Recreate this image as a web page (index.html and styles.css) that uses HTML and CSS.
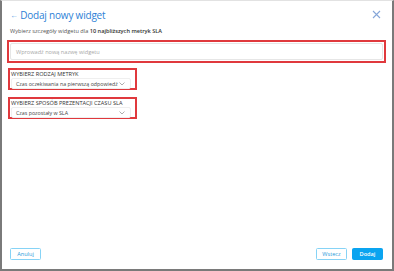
FILE: index.html
```html
<!DOCTYPE html>
<html lang="pl">
<head>
    <meta charset="UTF-8">
    <title>Dodaj nowy widget</title>
    <link rel="stylesheet" href="styles.css">
</head>
<body>
    <div class="dialog">
        <div class="dialog-head">
            <h1 class="title"><span class="back">&larr;</span> Dodaj nowy widget</h1>
            <svg class="close" width="9" height="9" viewBox="0 0 9 9"><path d="M1 1L8 8M8 1L1 8" stroke="#86a6d8" stroke-width="1.1" fill="none"/></svg>
        </div>
        <p class="subtitle">Wybierz szczegóły widgetu dla <b>10 najbliższych metryk SLA</b></p>

        <div class="mark mark-wide">
            <div class="field">Wprowadź nową nazwę widgetu</div>
        </div>

        <div class="mark mark-narrow">
            <div class="label">Wybierz rodzaj metryk</div>
            <div class="select">
                <span>Czas oczekiwania na pierwszą odpowiedź</span>
                <svg width="6" height="4" viewBox="0 0 6 4"><path d="M0.5 0.5L3 3L5.5 0.5" stroke="#999" stroke-width="0.8" fill="none"/></svg>
            </div>
        </div>

        <div class="mark mark-narrow">
            <div class="label">Wybierz sposób prezentacji czasu SLA</div>
            <div class="select">
                <span>Czas pozostały w SLA</span>
                <svg width="6" height="4" viewBox="0 0 6 4"><path d="M0.5 0.5L3 3L5.5 0.5" stroke="#999" stroke-width="0.8" fill="none"/></svg>
            </div>
        </div>

        <div class="spacer"></div>

        <div class="footer">
            <button class="btn btn-outline">Anuluj</button>
            <div class="footer-right">
                <button class="btn btn-outline">Wstecz</button>
                <button class="btn btn-primary">Dodaj</button>
            </div>
        </div>
    </div>
</body>
</html>
```

FILE: styles.css
```css
* {
    margin: 0;
    padding: 0;
    box-sizing: border-box;
    font-family: 'Open Sans', 'Noto Sans', sans-serif;
}

body {
    background: #fff;
}

.dialog {
    width: 394px;
    height: 271px;
    border-left: 2px solid #7a7a7a;
    border-right: 2px solid #7a7a7a;
    border-bottom: 2px solid #7a7a7a;
    border-top: 1px solid #e2e2e2;
    display: flex;
    flex-direction: column;
    padding: 0 6px 9px 5px;
}

.dialog-head {
    display: flex;
    justify-content: space-between;
    align-items: center;
    padding: 5px 5px 0 3px;
    height: 23px;
}

.title {
    font-size: 10px;
    font-weight: 400;
    color: #2d7fd6;
    letter-spacing: -0.2px;
    white-space: nowrap;
}

.back {
    font-size: 8px;
    color: #62a0e4;
    position: relative;
    top: -1px;
}

.close {
    margin-top: -2px;
}

.subtitle {
    font-size: 5.6px;
    color: #555;
    padding: 3px 0 0 3px;
    height: 16px;
}

.subtitle b {
    font-weight: 600;
    color: #333;
}

.mark {
    border: 2px solid #e0393d;
}

.mark-wide {
    padding: 1px 1px;
    height: 23px;
}

.field {
    height: 17px;
    border: 1px solid #e6e6e6;
    border-radius: 2px;
    font-size: 5.6px;
    color: #a8a8a8;
    padding: 4px 0 0 5px;
}

.mark-narrow {
    width: 129px;
    margin-left: 1px;
    margin-top: 5px;
    height: 22px;
    padding: 1px 4px 0 1px;
}

.mark-narrow + .mark-narrow {
    margin-top: 7px;
}

.label {
    font-size: 5.6px;
    color: #333;
    text-transform: uppercase;
    height: 7px;
    line-height: 7px;
    white-space: nowrap;
}

.select {
    height: 11px;
    border: 1px solid #efefef;
    border-radius: 2px;
    display: flex;
    align-items: center;
    justify-content: space-between;
    padding: 0 5px 0 4px;
    font-size: 5.3px;
    color: #444;
    white-space: nowrap;
}

.spacer {
    flex: 1;
}

.footer {
    display: flex;
    justify-content: space-between;
    align-items: center;
    padding: 0 3px 0 3px;
}

.footer-right {
    display: flex;
    gap: 5px;
}

.btn {
    height: 12px;
    width: 31px;
    font-size: 5.6px;
    border-radius: 1.5px;
    cursor: pointer;
}

.btn-outline {
    background: #fff;
    color: #2a9ad9;
    border: 1px solid #86d3f6;
}

.btn-primary {
    background: #0aa4f0;
    color: #fff;
    border: 1px solid #0aa4f0;
    font-weight: 600;
}
```
